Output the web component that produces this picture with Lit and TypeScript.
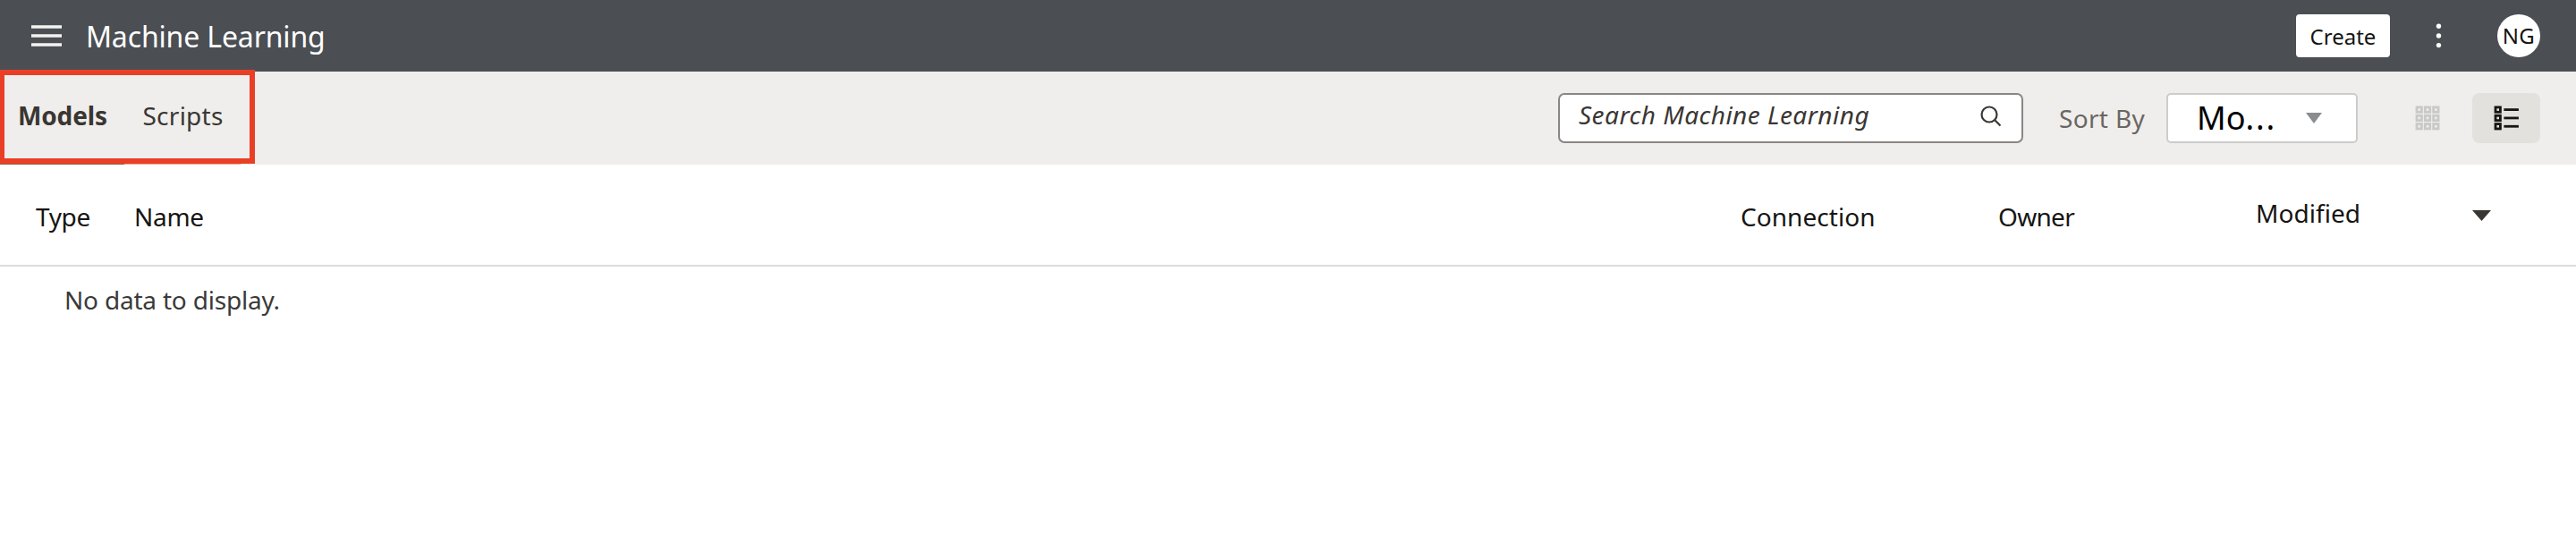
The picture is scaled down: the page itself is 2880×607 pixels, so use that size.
import { LitElement, html, svg, css } from "lit";
import { customElement, property, state } from "lit/decorators.js";
import { classMap } from "lit/directives/class-map.js";

const CELLS = [0, 9.33, 18.66];
const cell = (x: number, y: number) =>
  svg`<rect x=${x + 1.6} y=${y + 1.6} width="5.4" height="5.4" fill="none" stroke="currentColor" stroke-width="2.8"></rect>`;

@customElement("app-header")
class AppHeader extends LitElement {
  @property() heading = "";
  @property() initials = "";
  static styles = css`
    :host { display: flex; align-items: center; height: 80px; padding: 0 40px 0 35px; box-sizing: border-box; background: #4b4e53; color: #fff; }
    svg { display: block; flex: none; }
    .title { margin: 0 auto 0 27px; font-size: 32px; font-weight: 400; line-height: 80px; letter-spacing: -0.15px; padding-top: 1px; }
    .create { width: 105px; height: 48px; padding: 0; border: 0; border-radius: 4px; background: #fff; color: #161513; font: inherit; font-size: 24px; line-height: 49px; text-align: center; }
    .more { margin: 0 62px 0 51px; }
    .avatar { width: 48px; height: 48px; border-radius: 50%; background: #fff; color: #161513; font-size: 24px; line-height: 48px; letter-spacing: 0.4px; text-align: center; }
  `;
  render() {
    return html`
      <svg width="34" height="24" viewBox="0 0 34 24"><path d="M0 2h34M0 12h34M0 22h34" stroke="#f4f3f2" stroke-width="3.6"></path></svg>
      <h1 class="title">${this.heading}</h1>
      <button class="create">Create</button>
      <svg class="more" width="7" height="28" viewBox="0 0 7 28" fill="#fff">
        <circle cx="3.5" cy="3.3" r="2.7"></circle><circle cx="3.5" cy="14" r="2.7"></circle><circle cx="3.5" cy="24.6" r="2.7"></circle>
      </svg>
      <div class="avatar">${this.initials}</div>`;
  }
}

@customElement("app-toolbar")
class AppToolbar extends LitElement {
  @state() private tab = "Models";
  static styles = css`
    :host { display: flex; align-items: center; position: relative; height: 104px; padding-right: 40px; box-sizing: border-box; background: #efeeec; color: #3a3632; font-size: 28px; }
    svg { display: block; flex: none; }
    .tabs { display: flex; align-self: flex-start; margin-right: auto; }
    .tab { height: 104px; box-sizing: border-box; line-height: 98px; padding-left: 20px; width: 139px; border-bottom: 2px solid #f5a98f; }
    .tab + .tab { width: 130px; padding-left: 20.5px; letter-spacing: 0.25px; }
    .tab.current { font-weight: 700; border-color: #a5573d; letter-spacing: -0.15px; }
    .frame { position: absolute; left: 0; top: -2px; width: 285px; height: 105px; box-sizing: border-box; border: 6px solid #e93f26; border-left-width: 5px; }
    .search { display: flex; justify-content: space-between; width: 520px; height: 56px; box-sizing: border-box; padding: 0 22px 0 21px; border: 2px solid #8a8683; border-radius: 7px; background: #fff; }
    .hint { height: 40px; overflow: hidden; line-height: 44px; font-style: italic; letter-spacing: 0.48px; white-space: nowrap; }
    .search svg { margin-top: 12px; }
    .label { margin-left: 40px; width: 120px; color: #6b6662; letter-spacing: 0.33px; line-height: 56px; }
    .select { display: flex; align-items: center; justify-content: space-between; width: 214px; height: 56px; box-sizing: border-box; padding: 0 38px 0 32px; border: 2px solid #ceccca; border-radius: 5px; background: #fff; color: #000; font-size: 36px; line-height: 54px; }
    .dots { letter-spacing: 1.9px; }
    .view { display: grid; place-items: center; width: 76px; height: 56px; border-radius: 8px; color: #c9c9c9; }
    .grid { margin: 0 12px 0 40px; }
    .list { background: #e2e1dd; color: #161513; }
  `;
  render() {
    return html`
      <div class="tabs">
        ${["Models", "Scripts"].map(
          (t) => html`<div class=${classMap({ tab: true, current: t === this.tab })} @click=${() => (this.tab = t)}>${t}</div>`
        )}
      </div>
      <div class="search">
        <div class="hint">Search Machine Learning</div>
        <svg width="24" height="24" viewBox="0 0 24 24" fill="none" stroke="#3a3632" stroke-width="2.2"><circle cx="10" cy="10" r="8.5"></circle><path d="M16 16l6.5 6.5"></path></svg>
      </div>
      <div class="label">Sort By</div>
      <div class="select"><span>Mo<span class="dots">...</span></span>
        <svg width="18" height="12" viewBox="0 0 18 12"><path d="M0 0h18L9 12z" fill="#8b8c8e"></path></svg>
      </div>
      <div class="view grid"><svg width="28" height="28" viewBox="-0.4 -0.3 28 28">${CELLS.map((y) => CELLS.map((x) => cell(x, y)))}</svg></div>
      <div class="view list"><svg width="28" height="28" viewBox="-0.4 -0.3 28 28">${CELLS.map(
        (y) => svg`${cell(0, y)}<path d=${`M11 ${y + 4.3}h16.5`} stroke="currentColor" stroke-width="2.8"></path>`
      )}</svg></div>
      <div class="frame"></div>`;
  }
}

@customElement("model-table")
class ModelTable extends LitElement {
  static styles = css`
    :host { display: block; color: #161513; font-size: 28px; }
    .head { display: grid; grid-template-columns: 110px 1fr 288px 288px 242px 116px; align-items: center; height: 114px; box-sizing: border-box; padding: 2px 0 0 40px; border-bottom: 2px solid #dcdcdc; line-height: 40px; }
    .type { letter-spacing: -0.35px; padding-top: 2px; }
    .name { letter-spacing: -0.3px; padding-top: 2px; }
    .connection { letter-spacing: 0.05px; padding-top: 2px; }
    .owner { letter-spacing: -0.7px; padding-top: 2px; }
    .modified { letter-spacing: 0.05px; padding-bottom: 6px; }
    svg { display: block; }
    .empty { padding: 15px 72px 0; line-height: 44px; color: #3a3a3a; letter-spacing: -0.2px; }
  `;
  render() {
    return html`
      <div class="head">
        <div class="type">Type</div><div class="name">Name</div><div class="connection">Connection</div>
        <div class="owner">Owner</div><div class="modified">Modified</div>
        <svg width="21" height="12" viewBox="0 0 21 12"><path d="M0 0h21L10.5 12z" fill="#3a3631"></path></svg>
      </div>
      <div class="empty">No data to display.</div>`;
  }
}

@customElement("app-root")
class AppRoot extends LitElement {
  static styles = css`
    :host { display: block; height: 607px; overflow: hidden; background: #fff; font-family: "Noto Sans", "Open Sans", sans-serif; }
  `;
  render() {
    return html`
      <app-header heading="Machine Learning" initials="NG"></app-header>
      <app-toolbar></app-toolbar>
      <model-table></model-table>`;
  }
}
